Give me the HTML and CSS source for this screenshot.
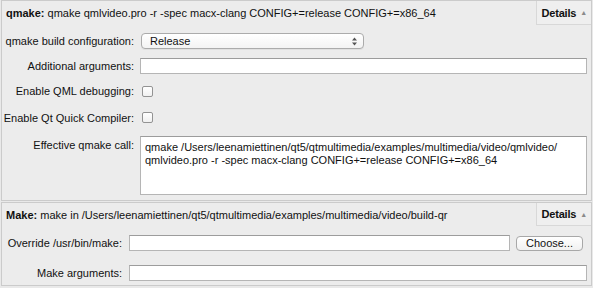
FILE: index.html
```html
<!DOCTYPE html>
<html lang="en">
<head>
  <meta charset="UTF-8">
  <title>Build Steps</title>
  <link rel="stylesheet" href="styles.css">
</head>
<body>
  <div class="step qmake-step">
    <div class="step-head">
      <span class="summary"><b>qmake:</b> qmake qmlvideo.pro -r -spec macx-clang CONFIG+=release CONFIG+=x86_64</span>
      <span class="details">Details <span class="arrow">&#9650;</span></span>
    </div>
    <div class="form qmake-form">
      <label class="lbl">qmake build configuration:</label>
      <div class="select">
        <span>Release</span>
        <svg width="5" height="9" viewBox="0 0 5 9"><path d="M2.5 0.5 L5 3.5 L0 3.5 Z M2.5 8.5 L5 5.5 L0 5.5 Z" fill="#555"/></svg>
      </div>

      <label class="lbl">Additional arguments:</label>
      <div class="input"></div>

      <label class="lbl">Enable QML debugging:</label>
      <div class="check-cell"><span class="checkbox"></span></div>

      <label class="lbl">Enable Qt Quick Compiler:</label>
      <div class="check-cell"><span class="checkbox"></span></div>

      <label class="lbl lbl-top">Effective qmake call:</label>
      <div class="textarea">qmake /Users/leenamiettinen/qt5/qtmultimedia/examples/multimedia/video/qmlvideo/<br>qmlvideo.pro -r -spec macx-clang CONFIG+=release CONFIG+=x86_64</div>
    </div>
  </div>

  <div class="step make-step">
    <div class="step-head">
      <span class="summary"><b>Make:</b> make in /Users/leenamiettinen/qt5/qtmultimedia/examples/multimedia/video/build-qr</span>
      <span class="details">Details <span class="arrow">&#9650;</span></span>
    </div>
    <div class="form make-form">
      <label class="lbl">Override /usr/bin/make:</label>
      <div class="field-with-button">
        <div class="input"></div>
        <span class="button">Choose...</span>
      </div>

      <label class="lbl">Make arguments:</label>
      <div class="input"></div>
    </div>
  </div>
</body>
</html>
```

FILE: styles.css
```css
body {
  margin: 0;
  padding: 0 1px;
  background: #e9e9e9;
  font-family: "Liberation Sans", Arial, sans-serif;
  font-size: 11px;
  color: #111;
}
.step {
  border: 1px solid #cbcbcb;
  background: #ececec;
}
.make-step {
  margin-top: 1px;
}
.step-head {
  display: flex;
  align-items: center;
  justify-content: space-between;
  height: 24px;
}
.make-step .step-head {
  height: 23px;
}
.summary {
  padding-left: 4px;
  white-space: nowrap;
}
.details {
  flex-shrink: 0;
  align-self: stretch;
  display: flex;
  align-items: center;
  white-space: nowrap;
  padding: 0 4px 0 5px;
  border-left: 1px solid #d8d8d8;
  border-bottom: 1px solid #d8d8d8;
  background: #efefef;
  font-weight: bold;
  letter-spacing: -0.2px;
}
.arrow {
  margin-left: 4px;
  font-size: 7px;
  font-weight: normal;
  color: #8a8a8a;
}
.form {
  display: grid;
  align-items: center;
  padding-right: 4px;
}
.qmake-form {
  grid-template-columns: 132px 1fr;
  grid-template-rows: 16px 16px 16px 19px auto;
  column-gap: 6px;
  row-gap: 9px;
  padding-top: 8px;
  padding-bottom: 5px;
}
.make-form {
  grid-template-columns: 120px 1fr;
  column-gap: 7px;
  row-gap: 14px;
  padding-top: 9px;
  padding-bottom: 4px;
}
.lbl {
  text-align: right;
  white-space: nowrap;
}
.lbl-top {
  align-self: start;
  padding-top: 3px;
}
.input {
  height: 16px;
  box-sizing: border-box;
  border: 1px solid #b5b5b5;
  border-top-color: #9c9c9c;
  background: #fff;
}
.select {
  display: flex;
  align-items: center;
  justify-content: space-between;
  width: 223px;
  height: 16px;
  margin-left: 1px;
  box-sizing: border-box;
  padding: 0 6px 0 8px;
  border: 1px solid #ababab;
  border-radius: 4px;
  background: linear-gradient(#ffffff, #f3f3f3);
  box-shadow: 0 1px 0 rgba(0, 0, 0, 0.05);
}
.check-cell {
  display: flex;
  align-items: center;
  height: 100%;
}
.checkbox {
  width: 11px;
  height: 11px;
  margin-left: 2px;
  box-sizing: border-box;
  border: 1px solid #939393;
  border-radius: 2px;
  background: linear-gradient(#ffffff, #f0f0f0);
}
.textarea {
  height: 59px;
  box-sizing: border-box;
  padding: 4px 4px;
  line-height: 13px;
  border: 1px solid #b5b5b5;
  border-top-color: #9c9c9c;
  background: #fff;
  white-space: nowrap;
}
.field-with-button {
  display: flex;
  align-items: center;
}
.field-with-button .input {
  flex: 1;
}
.button {
  width: 67px;
  height: 15px;
  margin: 0 4px 0 6px;
  box-sizing: border-box;
  border: 1px solid #a8a8a8;
  border-radius: 4px;
  background: linear-gradient(#ffffff, #f1f1f1);
  text-align: center;
  line-height: 13px;
}
```
